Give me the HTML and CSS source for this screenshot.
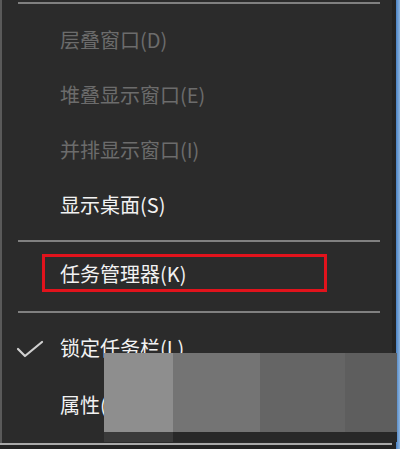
FILE: index.html
```html
<!DOCTYPE html>
<html lang="zh-CN">
<head>
    <meta charset="UTF-8">
    <title>任务栏菜单</title>
    <link rel="stylesheet" href="styles.css">
</head>
<body>
    <div class="screen">
        <div class="frame">
            <div class="menu">
                <div class="sep sep-top"></div>
                <div class="group group-first">
                    <div class="item disabled"><span class="icon"></span>层叠窗口(D)</div>
                    <div class="item disabled"><span class="icon"></span>堆叠显示窗口(E)</div>
                    <div class="item disabled"><span class="icon"></span>并排显示窗口(I)</div>
                    <div class="item"><span class="icon"></span>显示桌面(S)</div>
                </div>
                <div class="sep"></div>
                <div class="group group-mid">
                    <div class="item item-boxed">
                        <div class="highlight">任务管理器(K)</div>
                    </div>
                </div>
                <div class="sep"></div>
                <div class="group group-last">
                    <div class="item tall">
                        <span class="icon">
                            <svg width="60" height="24" viewBox="0 0 60 24">
                                <polyline points="18,13 25,20 42,6" fill="none" stroke="#d0d0d0" stroke-width="2.2" stroke-linecap="round" stroke-linejoin="round"/>
                            </svg>
                        </span>锁定任务栏(L)
                    </div>
                    <div class="item tall"><span class="icon"></span>属性(R)</div>
                </div>
            </div>
            <div class="bottom-line"></div>
        </div>
        <div class="edge-dark"></div>
        <div class="edge-blue"></div>

        <div class="redact">
            <div class="redact-main">
                <span class="shade s1"></span>
                <span class="shade s2"></span>
                <span class="shade s3"></span>
                <span class="shade s4"></span>
            </div>
            <div class="redact-foot">
                <span class="foot f1"></span>
                <span class="foot f2"></span>
            </div>
        </div>
    </div>
</body>
</html>
```

FILE: styles.css
```css
* {
    margin: 0;
    padding: 0;
    box-sizing: border-box;
}

body {
    background: #232323;
    font-family: "Noto Sans CJK SC", "Noto Sans", sans-serif;
    overflow: hidden;
}

.screen {
    position: relative;
    display: flex;
    width: 400px;
    height: 449px;
}

.frame {
    width: 392px;
    display: flex;
    flex-direction: column;
}

.menu {
    height: 443px;
    background: #2b2b2b;
    border-left: 2px solid #5a5a5a;
    padding-top: 2px;
    overflow: hidden;
}

.bottom-line {
    height: 2px;
    background: #a9a9a9;
}

.edge-dark {
    width: 4px;
    background: #232323;
}

.edge-blue {
    width: 4px;
    background: linear-gradient(to right, #4a82c4, #8fb6e0);
}

.sep {
    height: 2px;
    background: #808080;
    margin: 0 12px 0 16px;
}

.group-first {
    padding: 8px 0 8px;
}

.group-mid {
    padding: 6px 0 7px;
}

.group-last {
    padding-top: 6px;
}

.item {
    display: flex;
    align-items: center;
    height: 55px;
    font-size: 20px;
    color: #f2f2f2;
}

.item.tall {
    height: 57px;
}

.item.disabled {
    color: #6c6c6c;
}

.icon {
    width: 58px;
    display: flex;
    align-items: center;
    flex-shrink: 0;
}

.icon svg {
    display: block;
    margin-left: -2px;
}

.item-boxed {
    height: 56px;
    padding-left: 40px;
}

.highlight {
    width: 285px;
    height: 38px;
    border: 3px solid #e1131c;
    padding: 1px 0 0 15px;
    display: flex;
    align-items: center;
    margin-top: -6px;
    line-height: 1;
}

.redact {
    position: absolute;
    left: 104px;
    top: 353px;
    width: 293px;
    height: 89px;
    display: flex;
    flex-direction: column;
}

.redact-main {
    height: 79px;
    display: flex;
}

.shade {
    height: 100%;
}

.s1 { width: 69px; background: #8e8e8e; }
.s2 { width: 87px; background: #747474; }
.s3 { width: 85px; background: #656565; }
.s4 { flex: 1; background: #5e5e5e; }

.redact-foot {
    flex: 1;
    display: flex;
}

.f1 { width: 69px; background: #3a3a3a; }
.f2 { flex: 1; background: #282828; }
```
